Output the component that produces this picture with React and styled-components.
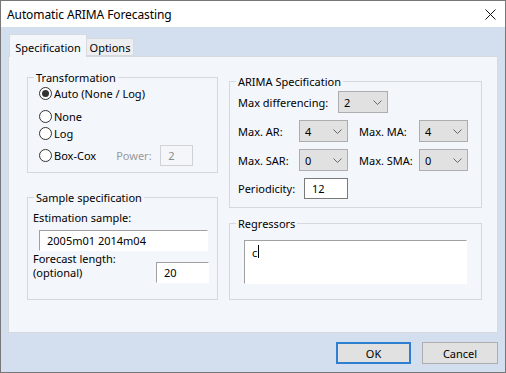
import React from "react";
import styled, { createGlobalStyle } from "styled-components";

const GlobalStyle = createGlobalStyle`
  html, body { margin: 0; padding: 0; }
  body {
    font-family: "Noto Sans", "Open Sans", sans-serif;
    font-size: 11px;
    color: #000;
  }
  * { box-sizing: border-box; }
`;

const Window = styled.div`
  width: 506px;
  height: 373px;
  border: 1px solid #777;
  display: flex;
  flex-direction: column;
  background: #d3deee;
`;

const TitleBar = styled.div`
  height: 26px;
  flex-shrink: 0;
  background: #fff;
  display: flex;
  align-items: center;
  justify-content: space-between;
  padding: 0 9px 0 6px;
  font-size: 12px;
  letter-spacing: -0.1px;
`;

const Body = styled.div`
  flex: 1;
  display: flex;
  flex-direction: column;
  padding: 0 7px 8px 7px;
`;

const TabStrip = styled.div`
  height: 29px;
  display: flex;
  align-items: flex-end;
  padding-left: 1px;
`;

const Tab = styled.div`
  position: relative;
  z-index: 1;
  width: ${({ $w }) => $w}px;
  height: ${({ $active }) => ($active ? 23 : 18)}px;
  margin-bottom: ${({ $active }) => ($active ? -1 : 0)}px;
  background: ${({ $active }) => ($active ? "#f3f6fb" : "#eceef2")};
  border: 1px solid #d6d9de;
  border-bottom: ${({ $active }) => ($active ? "none" : "1px solid #d6d9de")};
  border-left: ${({ $active }) => ($active ? "1px solid #d6d9de" : "none")};
  display: flex;
  align-items: center;
  justify-content: center;
  padding-top: ${({ $active }) => ($active ? 2 : 1)}px;
`;

const Panel = styled.div`
  flex: 1;
  background: #f3f6fb;
  border: 1px solid #d6d9de;
  display: flex;
  gap: 11px;
  padding: 13px 0 0 18px;
`;

const Column = styled.div`
  display: flex;
  flex-direction: column;
  gap: ${({ $gap }) => $gap}px;
  width: ${({ $w }) => $w}px;
  padding-top: ${({ $top }) => $top || 0}px;
`;

const Group = styled.fieldset`
  margin: 0;
  padding: 0 8px 0 ${({ $pl }) => $pl}px;
  height: ${({ $h }) => $h}px;
  border: 1px solid #d5d8de;
  min-width: 0;
`;

const Legend = styled.legend`
  margin-left: ${({ $ml }) => $ml}px;
  padding: 0 2px;
  line-height: 15px;
`;

const RadioRow = styled.div`
  display: flex;
  align-items: center;
  height: ${({ $h }) => $h || 16}px;
  margin-top: ${({ $mt }) => $mt || 0}px;
`;

const RadioCircle = styled.span`
  width: 13px;
  height: 13px;
  border: 1px solid #333;
  border-radius: 50%;
  background: #fff;
  display: inline-flex;
  align-items: center;
  justify-content: center;
  margin-right: 2px;
  flex-shrink: 0;
  &::after {
    content: "";
    width: 7px;
    height: 7px;
    border-radius: 50%;
    background: ${({ $checked }) => ($checked ? "#333" : "transparent")};
  }
`;

const Text = styled.span`
  line-height: ${({ $lh }) => $lh || 15}px;
  width: ${({ $w }) => ($w ? `${$w}px` : "auto")};
  flex-shrink: 0;
  color: ${({ $disabled }) => ($disabled ? "#9a9a9a" : "#000")};
  margin-left: ${({ $ml }) => $ml || 0}px;
`;

const Block = styled.div`
  display: flex;
  flex-direction: column;
  margin-top: ${({ $mt }) => $mt || 0}px;
  padding-left: ${({ $pl }) => $pl || 0}px;
`;

const Field = styled.div`
  width: ${({ $w }) => $w}px;
  height: ${({ $h }) => $h || 21}px;
  margin-top: ${({ $mt }) => $mt || 0}px;
  margin-left: ${({ $ml }) => $ml || 0}px;
  flex-shrink: 0;
  display: flex;
  align-items: ${({ $top }) => ($top ? "flex-start" : "center")};
  padding: ${({ $top }) => ($top ? "4px 0 0 7px" : "0 0 0 7px")};
  background: ${({ $variant }) => ($variant === "disabled" ? "#f4f6f9" : "#fff")};
  color: ${({ $variant }) => ($variant === "disabled" ? "#8a8a8a" : "#000")};
  border: 1px solid
    ${({ $variant }) =>
      $variant === "disabled" ? "#cfd2d6" : $variant === "box" ? "#7a7a7a" : "#fff"};
  border-top-color: ${({ $variant }) =>
    $variant === "disabled" ? "#cfd2d6" : $variant === "box" ? "#7a7a7a" : "#a0a0a0"};
  border-left-color: ${({ $variant }) =>
    $variant === "disabled" ? "#cfd2d6" : $variant === "box" ? "#7a7a7a" : "#a0a0a0"};
`;

const Caret = styled.span`
  display: inline-block;
  width: 1px;
  height: 13px;
  background: #000;
  margin-left: 1px;
`;

const Row = styled.div`
  display: flex;
  align-items: ${({ $start }) => ($start ? "flex-start" : "center")};
  justify-content: ${({ $spread }) => ($spread ? "space-between" : "flex-start")};
  margin-top: ${({ $mt }) => $mt || 0}px;
`;

const SelectBox = styled.div`
  width: ${({ $w }) => $w}px;
  height: 22px;
  flex-shrink: 0;
  border: 1px solid #adadad;
  background: #e1e1e1;
  display: flex;
  align-items: center;
  justify-content: space-between;
  padding: 0 5px 0 5px;
`;

const ArimaBody = styled.div`
  display: flex;
  flex-direction: column;
  gap: 7px;
  padding: 2px 0 0 8px;
`;

const Footer = styled.div`
  display: flex;
  justify-content: flex-end;
  gap: 11px;
  margin-top: 9px;
`;

const Button = styled.button`
  width: ${({ $w }) => $w}px;
  height: 22px;
  margin: 0;
  padding: 0;
  font: inherit;
  font-size: 11px;
  color: #000;
  background: #e1e1e1;
  border: ${({ $primary }) => ($primary ? "2px solid #2f7fd0" : "1px solid #adadad")};
`;

const Chevron = () => (
  <svg width="9" height="5" viewBox="0 0 9 5">
    <path d="M0.5 0.5 L4.5 4.5 L8.5 0.5" fill="none" stroke="#666" strokeWidth="1" />
  </svg>
);

const Select = ({ value, w }) => (
  <SelectBox $w={w}>
    <span>{value}</span>
    <Chevron />
  </SelectBox>
);

const Radio = ({ label, checked, mt, h, children }) => (
  <RadioRow $mt={mt} $h={h}>
    <RadioCircle $checked={checked} />
    <Text>{label}</Text>
    {children}
  </RadioRow>
);

export default function App() {
  return (
    <>
      <GlobalStyle />
      <Window>
        <TitleBar>
          <span>Automatic ARIMA Forecasting</span>
          <svg width="11" height="11" viewBox="0 0 11 11">
            <path d="M0.5 0.5 L10.5 10.5 M10.5 0.5 L0.5 10.5" stroke="#111" strokeWidth="1" />
          </svg>
        </TitleBar>
        <Body>
          <TabStrip>
            <Tab $active $w={78}>Specification</Tab>
            <Tab $w={47}>Options</Tab>
          </TabStrip>
          <Panel>
            <Column $w={191} $gap={17}>
              <Group $h={103} $pl={0}>
                <Legend $ml={6}>Transformation</Legend>
                <Block $pl={11}>
                  <Radio label="Auto (None / Log)" checked />
                  <Radio label="None" mt={7} />
                  <Radio label="Log" mt={1} />
                  <Radio label="Box-Cox" mt={3} h={22}>
                    <Text $disabled $ml={20} $w={44}>Power:</Text>
                    <Field $variant="disabled" $w={33} $h={21}>2</Field>
                  </Radio>
                </Block>
              </Group>
              <Group $h={110} $pl={5}>
                <Legend $ml={1}>Sample specification</Legend>
                <Block $mt={5}>
                  <Text>Estimation sample:</Text>
                </Block>
                <Field $w={169} $ml={6} $mt={5}>2005m01 2014m04</Field>
                <Row $mt={1} $start $spread>
                  <Block>
                    <Text $lh={14}>Forecast length:</Text>
                    <Text $lh={14}>(optional)</Text>
                  </Block>
                  <Field $w={53} $mt={10}>20</Field>
                </Row>
              </Group>
            </Column>
            <Column $w={253} $gap={8} $top={4}>
              <Group $h={134} $pl={0}>
                <Legend $ml={6}>ARIMA Specification</Legend>
                <ArimaBody>
                  <Row>
                    <Text $w={100}>Max differencing:</Text>
                    <Select value="2" w={50} />
                  </Row>
                  <Row>
                    <Text $w={61}>Max. AR:</Text>
                    <Select value="4" w={49} />
                    <Text $w={60} $ml={11}>Max. MA:</Text>
                    <Select value="4" w={49} />
                  </Row>
                  <Row>
                    <Text $w={61}>Max. SAR:</Text>
                    <Select value="0" w={49} />
                    <Text $w={60} $ml={11}>Max. SMA:</Text>
                    <Select value="0" w={49} />
                  </Row>
                  <Row>
                    <Text $w={66}>Periodicity:</Text>
                    <Field $variant="box" $w={44}>12</Field>
                  </Row>
                </ArimaBody>
              </Group>
              <Group $h={84} $pl={14}>
                <Legend $ml={-8}>Regressors</Legend>
                <Field $w={223} $h={44} $mt={9} $top>
                  c<Caret />
                </Field>
              </Group>
            </Column>
          </Panel>
          <Footer>
            <Button $primary $w={75}>OK</Button>
            <Button $w={76}>Cancel</Button>
          </Footer>
        </Body>
      </Window>
    </>
  );
}
